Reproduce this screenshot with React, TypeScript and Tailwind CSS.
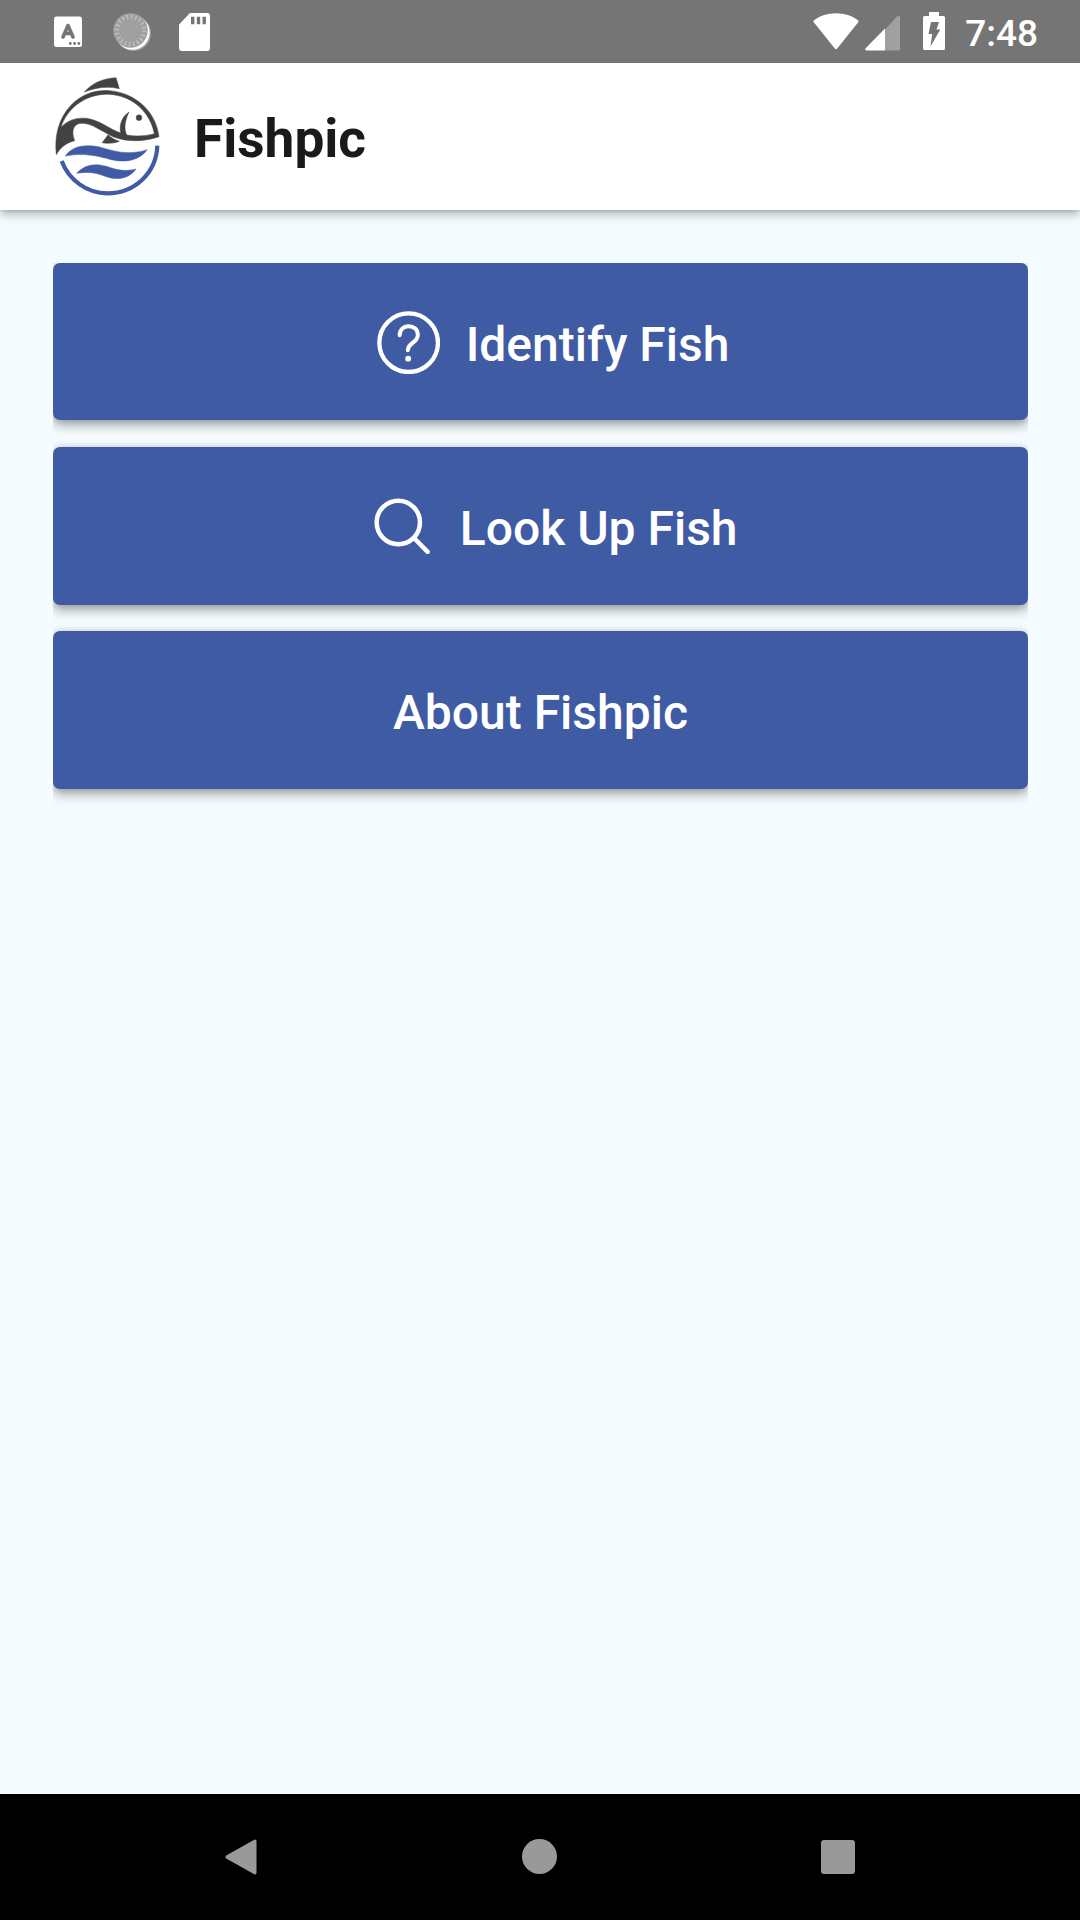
import type { ReactNode } from "react";

function KeyboardIcon() {
  return (
    <svg className="h-[32px] w-[28px]" viewBox="0 0 28 32">
      <rect x="0" y="0.5" width="28" height="30.5" rx="2.5" fill="#fff" />
      <path d="M9 21 L14 9.500 L19 21 M10.800 17.500 H17.200" fill="none" stroke="#757575" strokeWidth="3.600" strokeLinecap="round" strokeLinejoin="round" />
      <g fill="#757575">
        <circle cx="16.300" cy="27.500" r="1.400" />
        <circle cx="20.600" cy="27.500" r="1.400" />
        <circle cx="24.900" cy="27.500" r="1.400" />
      </g>
    </svg>
  );
}

function SyncIcon() {
  return (
    <svg className="h-[40px] w-[40px]" viewBox="0 0 40 40">
      <circle cx="20.500" cy="20.500" r="17.500" fill="#a0a0a0" />
      <circle cx="19.400" cy="19.400" r="17.300" fill="#fff" />
      <circle cx="17.500" cy="17.500" r="17.300" fill="#a0a0a0" />
      <circle cx="17.500" cy="17.500" r="13.700" fill="none" stroke="#bebebe" strokeWidth="4.500" strokeDasharray="1.500 2.804" />
    </svg>
  );
}

function SdCardIcon() {
  return (
    <svg className="h-[38px] w-[31px]" viewBox="0 0 31 38">
      <path d="M11 0 H28 Q31 0 31 3 V35 Q31 38 28 38 H3 Q0 38 0 35 V11.500 Z" fill="#fff" />
      <path d="M12 3.700h3.400v7.600h-3.400z M17.800 3.700h3.400v7.600h-3.400z M23.500 3.700h3.400v7.600h-3.400z" fill="#757575" />
    </svg>
  );
}

function WifiIcon() {
  return (
    <svg className="h-[37px] w-[46px]" viewBox="0 0 46 37">
      <path d="M1 7.200 Q10 0.300 23 0.300 T45 7.200 Q46 8 45.200 9.200 L24.200 35.500 Q23 36.800 21.800 35.500 L0.800 9.200 Q0 8 1 7.200 Z" fill="#fff" />
    </svg>
  );
}

function SignalIcon() {
  return (
    <svg className="h-[36px] w-[35px]" viewBox="0 0 35 36">
      <path d="M20 14.500 L32.500 1 Q35 -0.500 35 2.500 V34 Q35 35.500 33.500 35.500 H20 Z" fill="#a0a0a0" />
      <path d="M20 13.500 V35.500 H1.500 Q-0.500 35 0.600 33.300 Z" fill="#fff" />
    </svg>
  );
}

function BatteryIcon() {
  return (
    <svg className="h-[38px] w-[22px]" viewBox="0 0 22 38">
      <path d="M6 0 H16 V4 H20.500 Q22 4 22 5.500 V36.500 Q22 38 20.500 38 H1.500 Q0 38 0 36.500 V5.500 Q0 4 1.500 4 H6 Z" fill="#fff" />
      <path d="M8 10 H16 L13.500 17.500 H17.300 L7.500 34.500 L9.200 22 H5.500 Z" fill="#757575" />
    </svg>
  );
}

function FishLogo() {
  return (
    <svg className="h-[124px] w-[110px]" viewBox="40 30 330 372">
      <g fill="#424242" stroke="#424242" strokeWidth="1.500">
        <path d="M134 84 C158 58 185 44 229 41 L239 74 C205 66 170 70 134 84 Z" />
        <path d="M50 272 C44 220 55 165 94 124 C128 88 170 77 210 80 C290 87 350 145 358 218 C325 230 270 238 220 218 C185 202 160 180 130 178 C104 176 92 198 105 230 C80 236 62 250 50 272 Z M64 190 C85 168 110 160 140 163 C180 168 208 195 243 207 C238 185 246 158 268 144 C256 168 252 192 261 213 C290 218 320 216 344 209 C332 146 280 95 208 91 C142 88 83 130 64 190 Z" fillRule="evenodd" />
        <path d="M187 236 C194 229 198 221 205 212 C215 222 227 228 239 232 C222 239 205 239 187 236 Z" />
        <circle cx="298" cy="161" r="8.500" />
      </g>
      <g fill="#3f5ba4" stroke="#3f5ba4" strokeWidth="1.500">
        <path d="M77 276 C96 247 134 240 176 248 C218 259 262 277 323 257 C300 287 262 298 214 287 C172 275 133 266 77 276 Z" />
        <path d="M111 328 C135 302 164 297 200 307 C232 318 256 324 289 315 C270 343 235 350 200 338 C171 327 148 322 111 328 Z" />
        <path d="M66 291 C88 349 142 388 203 388 C285 388 350 327 353 245" fill="none" strokeWidth="12.500" />
      </g>
    </svg>
  );
}

function HelpIcon() {
  return (
    <svg className="mt-[1px] ml-[25.500px] size-[63.300px]" viewBox="0 0 190 190" fill="none" stroke="#fff" strokeWidth="13">
      <circle cx="95" cy="95" r="88" />
      <path d="M68 73 C68 56 80 45.500 95 45.500 C111 45.500 122.500 56 122.500 71 C122.500 82 117 88 108 95 C99 102 92.500 107 92.500 118" strokeWidth="12" strokeLinecap="round" />
      <circle cx="93.500" cy="143" r="8.800" fill="#fff" stroke="none" />
    </svg>
  );
}

function SearchIcon() {
  return (
    <svg className="mt-[1px] ml-[30.800px] size-[56.300px]" viewBox="0 0 169 169" fill="none" stroke="#fff" strokeWidth="13.500">
      <circle cx="73" cy="73.500" r="65" />
      <path d="M120 120 L161 161.500" strokeLinecap="round" />
    </svg>
  );
}

function MenuButton({ children }: { children: ReactNode }) {
  return (
    <button className="flex h-[157.500px] w-full shrink-0 items-center justify-center rounded-[7px] bg-[#3f5ba4] text-[48px] leading-[56px] font-medium text-white shadow-[0_5px_12px_rgba(0,0,0,0.36),0_0_6px_rgba(0,0,0,0.12)]">
      {children}
    </button>
  );
}

export default function App() {
  return (
    <div className="flex h-[1920px] w-[1080px] flex-col overflow-hidden bg-[#f5fcff] font-[Roboto,sans-serif]">
      <div className="relative z-10 flex h-[63px] shrink-0 items-start bg-[#757575] pr-[42px] pl-[54.300px]">
        <div className="mt-[15.500px]"><KeyboardIcon /></div>
        <div className="mt-[12.500px] ml-[30.500px]"><SyncIcon /></div>
        <div className="mt-[12.500px] ml-[26.200px]"><SdCardIcon /></div>
        <div className="mt-[12.500px] ml-auto"><WifiIcon /></div>
        <div className="mt-[14.500px] ml-[6px]"><SignalIcon /></div>
        <div className="mt-[12px] ml-[23px]"><BatteryIcon /></div>
        <span className="mt-[12.500px] ml-[20px] text-[37px] leading-[42px] font-medium text-white">7:48</span>
      </div>
      <header className="relative flex h-[147px] shrink-0 items-start bg-white pl-[53px] shadow-[0_4px_10px_rgba(0,0,0,0.3),0_0_4px_rgba(0,0,0,0.15)]">
        <div className="mt-[11px]"><FishLogo /></div>
        <h1 className="mt-[45px] ml-[31px] text-[53.200px] leading-[62px] font-bold text-[#1a1a1a]">Fishpic</h1>
      </header>
      <main className="flex flex-1 flex-col pt-[52.950px]">
        <div className="mr-[52px] ml-[53px] flex flex-1 flex-col gap-[26.600px] overflow-hidden">
          <MenuButton>
            <HelpIcon />
            <span className="mt-[6px] ml-[25.300px]">Identify Fish</span>
          </MenuButton>
          <MenuButton>
            <SearchIcon />
            <span className="mt-[6px] ml-[29.300px]">Look Up Fish</span>
          </MenuButton>
          <MenuButton>
            <span className="mt-[6px]">About Fishpic</span>
          </MenuButton>
        </div>
      </main>
      <nav className="flex h-[126px] shrink-0 items-center bg-black pl-[225px]">
        <svg className="h-[36px] w-[32px]" viewBox="0 0 32 36">
          <path d="M1.200 16.500 L28.800 0.900 Q31.500 -0.200 31.500 2.500 V33.500 Q31.500 36.200 28.800 35.100 L1.200 19.500 Q-0.400 18 1.200 16.500 Z" fill="#999" />
        </svg>
        <div className="mb-[1px] ml-[265px] size-[35px] rounded-full bg-[#999]" />
        <div className="ml-[264px] size-[34px] rounded-[3px] bg-[#999]" />
      </nav>
    </div>
  );
}
